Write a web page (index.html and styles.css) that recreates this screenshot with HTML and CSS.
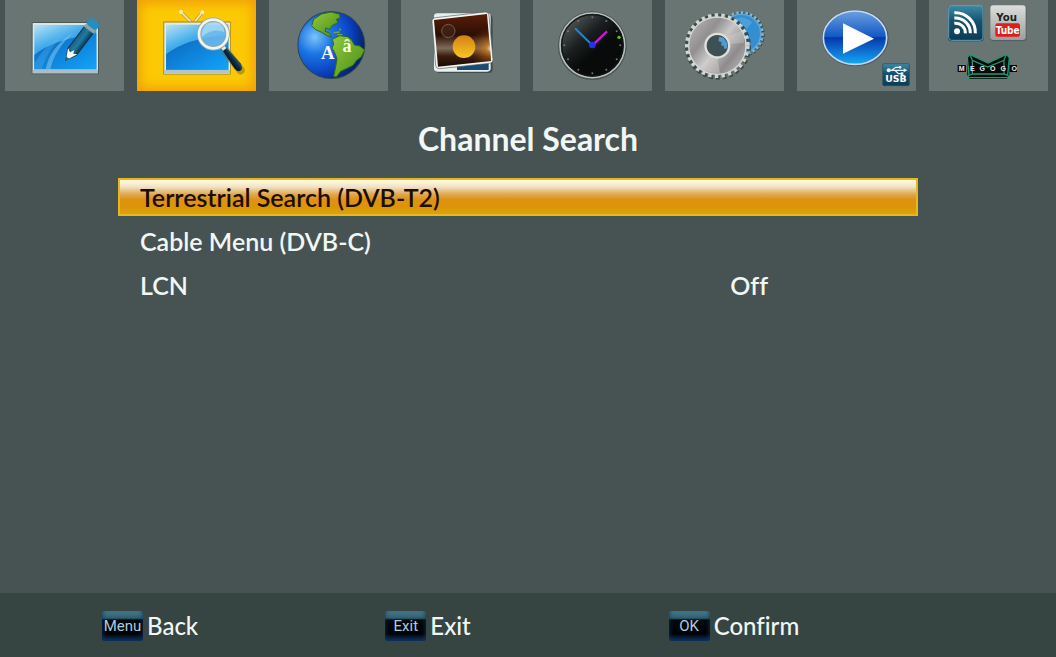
FILE: index.html
```html
<!DOCTYPE html>
<html lang="en">
<head>
    <meta charset="UTF-8">
    <meta name="viewport" content="width=device-width, initial-scale=1.0">
    <title>Channel Search</title>
    <link rel="stylesheet" href="styles.css">
</head>
<body>
    <nav class="tabs" aria-label="Main menu">
        <button class="tab" type="button" aria-label="Edit channels">
            <svg viewBox="0 0 357 273">
                <defs>
                    <linearGradient id="screen" x1="0" y1="0" x2="0.6" y2="1">
                        <stop offset="0" stop-color="#b9e2f8"/>
                        <stop offset="0.4" stop-color="#46aeea"/>
                        <stop offset="1" stop-color="#0878d6"/>
                    </linearGradient>
                    <linearGradient id="wave" x1="0" y1="0" x2="1" y2="1">
                        <stop offset="0" stop-color="#0a62b8"/>
                        <stop offset="1" stop-color="#12a4fb"/>
                    </linearGradient>
                    <linearGradient id="pencil" x1="0" y1="0" x2="0" y2="1">
                        <stop offset="0" stop-color="#1b6285"/>
                        <stop offset="0.5" stop-color="#207ba0"/>
                        <stop offset="1" stop-color="#0b3e5c"/>
                    </linearGradient>
                </defs>
                <rect x="80" y="66" width="202" height="157" rx="3" fill="#4c5958"/>
                <rect x="83" y="69" width="196" height="151" fill="#d9e6e8"/>
                <rect x="88" y="75" width="186" height="133" fill="url(#screen)"/>
                <path d="M88 165 Q140 120 274 100 V208 H88z" fill="url(#wave)"/>
                <path d="M88 190 Q125 125 195 88 Q130 140 110 208 H88z" fill="#65baf0" opacity="0.3"/>
                <path d="M122 208 Q135 140 205 98 Q148 150 136 208z" fill="#9bd5f7" opacity="0.45"/>
                <rect x="83" y="209" width="196" height="10" fill="#a9bfc5"/>
                <g transform="translate(181 183) rotate(-53)">
                    <path d="M0 0 L34 -18 H118 V18 H34z" fill="#0c3348"/>
                    <path d="M34 -15 H118 V15 H34z" fill="url(#pencil)"/>
                    <path d="M3 0 L36 -17 L30 -5 L42 2 L32 6 L38 17z" fill="#f6f8f5"/>
                    <path d="M0 0 L12 -6 V6z" fill="#1d6f67"/>
                    <rect x="116" y="-18" width="12" height="36" fill="#8fa3a8"/>
                    <rect x="127" y="-18" width="24" height="36" rx="8" fill="#238fc0"/>
                </g>
            </svg>
        </button>
        <button class="tab active" type="button" aria-label="Channel search" aria-current="page">
            <svg viewBox="0 0 357 273">
                <defs>
                    <linearGradient id="handle" x1="0" y1="0" x2="0" y2="1">
                        <stop offset="0" stop-color="#2c5779"/>
                        <stop offset="0.5" stop-color="#0a2a48"/>
                        <stop offset="1" stop-color="#061320"/>
                    </linearGradient>
                </defs>
                <path d="M132 36 L165 69 M196 37 L170 69" stroke="#b49a35" stroke-width="9"/>
                <path d="M132 36 L165 69 M196 37 L170 69" stroke="#f4ecc0" stroke-width="5"/>
                <circle cx="132" cy="36" r="6" fill="#f4ecc0"/>
                <circle cx="196" cy="37" r="6" fill="#f4ecc0"/>
                <rect x="78" y="64" width="204" height="160" rx="3" fill="#b79a22"/>
                <rect x="82" y="68" width="197" height="153" fill="#e3ebe2"/>
                <rect x="87" y="74" width="187" height="135" fill="url(#screen)"/>
                <path d="M87 163 Q145 115 274 104 V209 H87z" fill="url(#wave)"/>
                <rect x="82" y="210" width="197" height="10" fill="#b3c5c5"/>
                <path d="M267 155 L311 211" stroke="#7d6b1c" stroke-width="25" stroke-linecap="round" opacity="0.5"/>
                <g transform="translate(259 143) rotate(52)">
                    <rect x="-8" y="-6" width="18" height="12" fill="#e3e9e7"/>
                    <path d="M7 -7 L70 -12 Q86 -8 86 0 Q86 12 70 12 L7 7z" fill="url(#handle)"/>
                </g>
                <circle cx="229" cy="102" r="43" fill="#7cc1ee" fill-opacity="0.75" stroke="#93a7a5" stroke-width="13"/>
                <circle cx="229" cy="102" r="43" fill="none" stroke="#f1f5ee" stroke-width="8"/>
                <path d="M194 99 Q200 66 236 67 Q262 72 262 96 Q225 82 194 111z" fill="#d4effd" opacity="0.45"/>
            </svg>
        </button>
        <button class="tab" type="button" aria-label="Language">
            <svg viewBox="0 0 357 273">
                <defs>
                    <radialGradient id="ocean" cx="0.25" cy="0.38" r="0.75">
                        <stop offset="0" stop-color="#79c3fb"/>
                        <stop offset="0.35" stop-color="#1b74e4"/>
                        <stop offset="0.75" stop-color="#0a3fc0"/>
                        <stop offset="1" stop-color="#062468"/>
                    </radialGradient>
                    <linearGradient id="land" x1="0" y1="0" x2="1" y2="1">
                        <stop offset="0" stop-color="#8fc93c"/>
                        <stop offset="1" stop-color="#4c8c16"/>
                    </linearGradient>
                </defs>
                <circle cx="187" cy="135" r="102" fill="#2b4557"/>
                <circle cx="187" cy="135" r="99" fill="url(#ocean)"/>
                <g fill="url(#land)" stroke="#2f6a1b" stroke-width="3">
                    <path d="M128 78 L134 58 L158 42 L186 36 L212 43 L213 54 L202 58 L207 68 L190 76 L182 88 L170 84 L168 94 L180 98 L188 112 L176 108 L156 96 L142 90z"/>
                    <path d="M190 118 L212 107 L236 110 L248 120 L256 135 L272 138 L287 150 L277 170 L262 182 L252 196 L232 206 L215 214 L202 231 L194 229 L200 200 L204 176 L198 160 L189 144 L194 132z"/>
                </g>
                <path d="M194 98 L212 96 M204 104 H220 M211 86 L216 91" stroke="#7aa93b" stroke-width="4"/>
                <text class="glyph-serif" x="176" y="176" font-size="56">A</text>
                <text class="glyph-serif" x="234" y="157" font-size="54">â</text>
            </svg>
        </button>
        <button class="tab" type="button" aria-label="Picture">
            <svg viewBox="0 0 357 273">
                <defs>
                    <linearGradient id="photo" x1="0" y1="0" x2="0" y2="1">
                        <stop offset="0" stop-color="#5a1d08"/>
                        <stop offset="0.4" stop-color="#2b0f06"/>
                        <stop offset="0.65" stop-color="#806a58"/>
                        <stop offset="0.8" stop-color="#3a1c0c"/>
                        <stop offset="1" stop-color="#170904"/>
                    </linearGradient>
                    <radialGradient id="flare" cx="1" cy="0.65" r="0.4">
                        <stop offset="0" stop-color="#fff3ac"/>
                        <stop offset="0.2" stop-color="#d98a1c" stop-opacity="0.7"/>
                        <stop offset="1" stop-color="#7a2c06" stop-opacity="0"/>
                    </radialGradient>
                    <linearGradient id="sun" x1="0" y1="0" x2="0" y2="1">
                        <stop offset="0" stop-color="#d67f16"/>
                        <stop offset="1" stop-color="#f6c81f"/>
                    </linearGradient>
                </defs>
                <rect x="104" y="44" width="171" height="175" rx="12" fill="#303c3d" opacity="0.7"/>
                <rect x="99" y="40" width="170" height="175" rx="10" fill="#e9eeee"/>
                <rect x="168" y="190" width="95" height="20" fill="#184b76"/>
                <path d="M93 66 Q92 54 104 53 L252 36 Q262 35 264 46 L276 178 Q277 188 266 190 L116 206 Q105 207 104 196z" fill="#f4f6f6" stroke="#516060" stroke-width="2"/>
                <path d="M99 60 L258 42 L270 183 L111 200z" fill="url(#photo)"/>
                <path d="M99 60 L258 42 L270 183 L111 200z" fill="url(#flare)"/>
                <circle cx="142" cy="93" r="20" fill="#4b2c20" fill-opacity="0.5" stroke="#77584a" stroke-width="3"/>
                <circle cx="189" cy="140" r="34" fill="url(#sun)"/>
            </svg>
        </button>
        <button class="tab" type="button" aria-label="Time">
            <svg viewBox="0 0 357 273">
                <defs>
                    <linearGradient id="dial" x1="0.1" y1="0.1" x2="0.55" y2="0.6">
                        <stop offset="0" stop-color="#555b5b"/>
                        <stop offset="0.6" stop-color="#1c1f1f"/>
                        <stop offset="1" stop-color="#090b0b"/>
                    </linearGradient>
                </defs>
                <circle cx="178" cy="137" r="103" fill="#4a5554"/>
                <circle cx="178" cy="136" r="97" fill="url(#dial)" stroke="#b9c0bf" stroke-width="5"/>
                <circle cx="178" cy="136" r="92" fill="none" stroke="#131616" stroke-width="4"/>
                <g fill="#6f7676">
                    <circle cx="178" cy="52" r="3"/>
                    <circle cx="220" cy="63" r="3"/>
                    <circle cx="251" cy="94" r="3"/>
                    <circle cx="262" cy="136" r="3"/>
                    <circle cx="251" cy="178" r="3"/>
                    <circle cx="220" cy="209" r="3"/>
                    <circle cx="178" cy="220" r="3"/>
                    <circle cx="136" cy="209" r="3"/>
                    <circle cx="105" cy="178" r="3"/>
                    <circle cx="94" cy="136" r="3"/>
                    <circle cx="105" cy="94" r="3"/>
                    <circle cx="136" cy="63" r="3"/>
                </g>
                <circle cx="258" cy="112" r="5" fill="#62c81c"/>
                <path d="M178 136 L126 85" stroke="#2f7fc4" stroke-width="6"/>
                <path d="M178 136 L222 94" stroke="#cf16d6" stroke-width="7"/>
                <circle cx="178" cy="135" r="10" fill="#2430ee"/>
            </svg>
        </button>
        <button class="tab" type="button" aria-label="System settings">
            <svg viewBox="0 0 357 273">
                <defs>
                    <linearGradient id="steel" x1="0" y1="0.1" x2="1" y2="0.9">
                        <stop offset="0" stop-color="#b8b6b5"/>
                        <stop offset="0.3" stop-color="#918f8f"/>
                        <stop offset="0.5" stop-color="#c9c7c6"/>
                        <stop offset="0.75" stop-color="#8d8b8b"/>
                        <stop offset="1" stop-color="#bcbaba"/>
                    </linearGradient>
                </defs>
                <!-- small gear, teeth are the dashes of the outer ring -->
                <circle cx="231" cy="103" r="63" fill="none" stroke="#344849" stroke-width="10" stroke-dasharray="8 6"/>
                <circle cx="229" cy="101" r="63" fill="none" stroke="#7db9e2" stroke-width="9" stroke-dasharray="7 7"/>
                <circle cx="229" cy="101" r="58" fill="#338fd2" stroke="#5fa8da" stroke-width="4"/>
                <path d="M200 60 Q232 42 262 67 L235 98z" fill="#5cabe1" opacity="0.6"/>
                <circle cx="159" cy="140" r="93" fill="none" stroke="#3d4948" stroke-width="12" stroke-dasharray="12 8"/>
                <path fill-rule="evenodd" d="M71 137 a86 86 0 1 0 172 0 a86 86 0 1 0 -172 0z M120 137 a37 37 0 1 1 74 0 a37 37 0 1 1 -74 0z" fill="url(#steel)" stroke="#d4d8d5" stroke-width="4"/>
                <circle cx="157" cy="137" r="91" fill="none" stroke="#d1d5d1" stroke-width="12" stroke-dasharray="10 10"/>
                <path d="M178 113 L231 92 Q239 110 238 128 L193 132z" fill="#d6d4d2" opacity="0.35"/>
                <path d="M137 167 L105 202 Q132 223 165 220 L157 174z" fill="#e2dfdc" opacity="0.35"/>
                <circle cx="157" cy="137" r="35" fill="#3f5054" stroke="#e0e1dc" stroke-width="6"/>
                <path d="M163 110 L176 113 L187 130 L187 145 L178 147 L176 138 L168 136 L170 127 L160 123z" fill="#4c9bd2"/>
            </svg>
        </button>
        <button class="tab" type="button" aria-label="USB media">
            <svg viewBox="0 0 357 273">
                <defs>
                    <linearGradient id="play" x1="0" y1="0" x2="0" y2="1">
                        <stop offset="0" stop-color="#6b9fe0"/>
                        <stop offset="0.48" stop-color="#1258c4"/>
                        <stop offset="0.5" stop-color="#0637ad"/>
                        <stop offset="1" stop-color="#15aaf4"/>
                    </linearGradient>
                    <linearGradient id="badge" x1="0" y1="0" x2="0" y2="1">
                        <stop offset="0" stop-color="#3f8aa5"/>
                        <stop offset="0.45" stop-color="#17516f"/>
                        <stop offset="1" stop-color="#0c3a56"/>
                    </linearGradient>
                </defs>
                <ellipse cx="175" cy="114" rx="100" ry="85" fill="#495a6b"/>
                <ellipse cx="174" cy="113" rx="95" ry="80" fill="url(#play)" stroke="#c7d9ef" stroke-width="5"/>
                <path d="M138 70 L231 116 L138 161z" fill="#fff"/>
                <rect x="257" y="191" width="80" height="66" rx="4" fill="url(#badge)" stroke="#2c4b58" stroke-width="2"/>
                <g fill="none" stroke="#e3f0f3" stroke-width="4">
                    <path d="M272 211 H324 M284 211 L296 202 H308 M294 211 L304 221 H315"/>
                </g>
                <circle cx="275" cy="211" r="6" fill="#e3f0f3"/>
                <path d="M320 205 L331 211 L320 217z" fill="#e3f0f3"/>
                <circle cx="309" cy="202" r="4" fill="#e3f0f3"/>
                <rect x="311" y="217" width="8" height="8" fill="#e3f0f3"/>
                <text class="glyph-wide" x="297" y="247" font-size="28">USB</text>
            </svg>
        </button>
        <button class="tab" type="button" aria-label="Internet">
            <svg viewBox="0 0 357 273">
                <defs>
                    <linearGradient id="silver" x1="0" y1="0" x2="0" y2="1">
                        <stop offset="0" stop-color="#dcdedd"/>
                        <stop offset="1" stop-color="#9a9e9d"/>
                    </linearGradient>
                </defs>
                <rect x="57" y="17" width="107" height="107" rx="10" fill="#173e51"/>
                <rect x="59" y="17" width="103" height="104" rx="9" fill="url(#badge)" stroke="#6aa0b5" stroke-width="3"/>
                <circle cx="84" cy="94" r="9" fill="#fff"/>
                <g fill="none" stroke="#fff" stroke-width="9">
                    <path d="M76 70 A29 29 0 0 1 109 100"/>
                    <path d="M76 54 A45 45 0 0 1 124 100"/>
                    <path d="M76 38 A60 60 0 0 1 139 100"/>
                </g>
                <rect x="184" y="17" width="109" height="107" rx="10" fill="#59605f"/>
                <rect x="184" y="16" width="106" height="104" rx="9" fill="url(#silver)"/>
                <text class="glyph-you" x="233" y="62" font-size="34">You</text>
                <rect x="199" y="70" width="74" height="40" rx="6" fill="#df1d1c"/>
                <text class="glyph-tube" x="236" y="101" font-size="30">Tube</text>
                <path d="M122 163 L177 189 L232 163 L241 176 V225 L234 237 H122 L115 225 V176z" fill="#050807"/>
                <g fill="none" stroke="#1f9a75" stroke-width="4">
                    <path d="M122 163 L177 189 L232 163 L241 172 L236 226 L241 233 H114 L120 226 L115 172z"/>
                    <path d="M122 163 L130 181 L176 201 L225 181 L232 163 M130 181 V222 H225 V181 M120 226 L130 222 M236 226 L225 222"/>
                </g>
                <path d="M86 195 H111 V216 H86z M242 195 H264 V216 H242z" fill="#050807"/>
                <g class="glyph-megogo" font-size="21">
                    <text x="98" y="213">M</text>
                    <text x="130" y="213">E</text>
                    <text x="160" y="213">G</text>
                    <text x="191" y="213">O</text>
                    <text x="223" y="213">G</text>
                    <text x="256" y="213">O</text>
                </g>
            </svg>
        </button>
    </nav>
    <main class="content">
        <h1>Channel Search</h1>
        <div class="menu">
            <button class="menu-item selected" type="button">Terrestrial Search (DVB-T2)</button>
            <button class="menu-item" type="button">Cable Menu (DVB-C)</button>
            <button class="menu-item" type="button">
                <span>LCN</span>
                <span class="value">Off</span>
            </button>
        </div>
    </main>
    <footer class="hints">
        <button class="hint" type="button"><kbd>Menu</kbd>Back</button>
        <button class="hint" type="button"><kbd>Exit</kbd>Exit</button>
        <button class="hint" type="button"><kbd>OK</kbd>Confirm</button>
    </footer>
</body>
</html>
```
FILE: styles.css
```css
:root {
    --bg: #475352;
    --tab-bg: #697573;
    --footer-bg: #364442;
    --text: #f0f7f5;
    --font-family: Lato, "Open Sans", sans-serif;
}
* {
    box-sizing: border-box;
}
body {
    margin: 0;
    min-height: 100vh;
    display: flex;
    flex-direction: column;
    font-family: var(--font-family);
    font-variant-ligatures: none;
    background-color: var(--bg);
    color: var(--text);
}
button {
    margin: 0;
    padding: 0;
    border: 0;
    background: none;
    color: inherit;
    font: inherit;
    font-variant-ligatures: none;
    text-align: left;
    cursor: pointer;
}
.tabs {
    display: grid;
    grid-template-columns: repeat(8, 1fr);
    gap: 13px;
    padding: 0 8px 0 5px;
}
.tab {
    height: 91px;
    background-color: var(--tab-bg);
}
.tab svg {
    display: block;
    width: 100%;
    height: 100%;
}
.tab.active {
    background-color: #fcc904;
    box-shadow: inset 0 0 12px 3px #f09c08;
}
.glyph-serif {
    font-family: "Liberation Serif", serif;
    font-weight: bold;
    fill: #f2f8fb;
    text-anchor: middle;
}
.glyph-wide {
    font-family: "DejaVu Sans", sans-serif;
    font-weight: bold;
    fill: #fff;
    text-anchor: middle;
}
.glyph-you,
.glyph-tube {
    font-family: "Liberation Sans Narrow", "DejaVu Sans Condensed", sans-serif;
    font-weight: bold;
    fill: #1d1f1f;
    text-anchor: middle;
}
.glyph-tube {
    fill: #fff;
}
.glyph-megogo {
    font-family: "Liberation Sans", sans-serif;
    font-weight: bold;
    fill: #e6ebea;
    text-anchor: middle;
}
.content {
    flex: 1;
    padding: 28px 138px 28px 118px;
}
h1 {
    margin: 0 0 19px;
    padding-left: 20px;
    font-size: 32px;
    line-height: 40px;
    font-weight: bold;
    text-align: center;
}
.menu {
    display: flex;
    flex-direction: column;
    gap: 6px;
}
.menu-item {
    display: flex;
    align-items: center;
    justify-content: space-between;
    min-height: 38px;
    padding-left: 20px;
    border: 2px solid transparent;
    font-size: 25px;
    line-height: 32px;
    font-weight: 600;
}
.menu-item.selected {
    border-color: #e6b820;
    background: linear-gradient(#fffbe0, #f3e3c4 20%, #e0a850 42%, #de9310 58%, #dd940b 80%, #dca408) padding-box;
    color: #1c0d04;
}
.value {
    width: 43%;
    text-align: center;
}
.hints {
    display: grid;
    grid-template-columns: repeat(3, 1fr);
    padding: 17px 104px 15px 102px;
    background-color: var(--footer-bg);
}
.hint {
    display: flex;
    align-items: center;
    gap: 4px;
    font-size: 24px;
    line-height: 32px;
    font-weight: 500;
}
kbd {
    width: 41px;
    height: 30px;
    border-radius: 3px;
    background: linear-gradient(#4b7f90, #2d5c6c 24%, #03080d 30%, #010203 75%, #0a2442);
    box-shadow: inset 0 -2px 5px #0d3563;
    color: #a9cde2;
    font-family: Roboto, "Liberation Sans", sans-serif;
    font-size: 15px;
    line-height: 30px;
    font-weight: normal;
    text-align: center;
}
```
